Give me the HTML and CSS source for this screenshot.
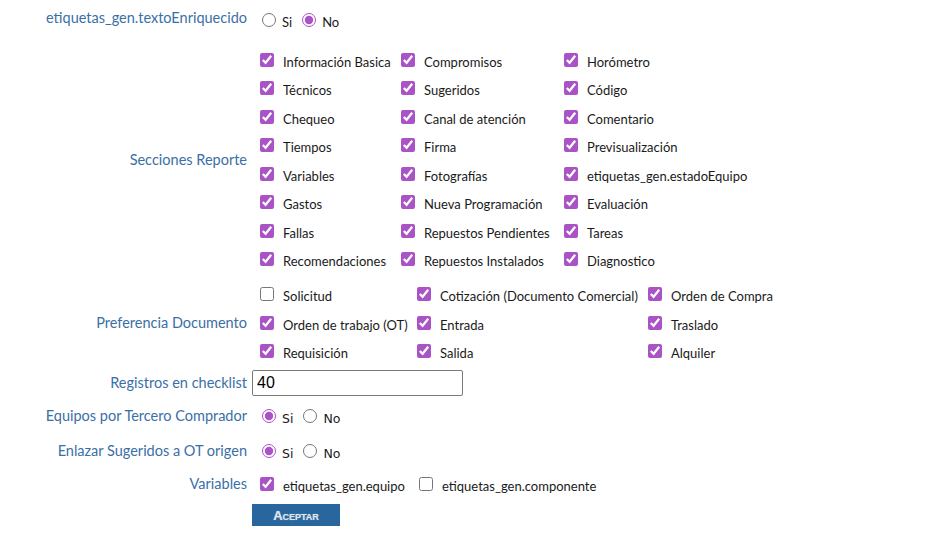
FILE: index.html
```html
<!DOCTYPE html>
<html lang="es">
<head>
<meta charset="utf-8">
<title>Configuración</title>
<link rel="stylesheet" href="styles.css">
</head>
<body>
<form class="form">
  <div class="row r-rich">
    <div class="lbl">etiquetas_gen.textoEnriquecido</div>
    <div class="radios">
      <label class="radio"><input type="radio" name="rich"><span>Si</span></label>
      <label class="radio"><input type="radio" name="rich" checked><span>No</span></label>
    </div>
  </div>

  <div class="row r-rep">
    <div class="lbl lbl-up">Secciones Reporte</div>
    <div class="opts opts-rep">
      <label class="opt"><input type="checkbox" checked><span>Información Basica</span></label>
      <label class="opt"><input type="checkbox" checked><span>Compromisos</span></label>
      <label class="opt"><input type="checkbox" checked><span>Horómetro</span></label>
      <label class="opt"><input type="checkbox" checked><span>Técnicos</span></label>
      <label class="opt"><input type="checkbox" checked><span>Sugeridos</span></label>
      <label class="opt"><input type="checkbox" checked><span>Código</span></label>
      <label class="opt"><input type="checkbox" checked><span>Chequeo</span></label>
      <label class="opt"><input type="checkbox" checked><span>Canal de atención</span></label>
      <label class="opt"><input type="checkbox" checked><span>Comentario</span></label>
      <label class="opt"><input type="checkbox" checked><span>Tiempos</span></label>
      <label class="opt"><input type="checkbox" checked><span>Firma</span></label>
      <label class="opt"><input type="checkbox" checked><span>Previsualización</span></label>
      <label class="opt"><input type="checkbox" checked><span>Variables</span></label>
      <label class="opt"><input type="checkbox" checked><span>Fotografías</span></label>
      <label class="opt"><input type="checkbox" checked><span>etiquetas_gen.estadoEquipo</span></label>
      <label class="opt"><input type="checkbox" checked><span>Gastos</span></label>
      <label class="opt"><input type="checkbox" checked><span>Nueva Programación</span></label>
      <label class="opt"><input type="checkbox" checked><span>Evaluación</span></label>
      <label class="opt"><input type="checkbox" checked><span>Fallas</span></label>
      <label class="opt"><input type="checkbox" checked><span>Repuestos Pendientes</span></label>
      <label class="opt"><input type="checkbox" checked><span>Tareas</span></label>
      <label class="opt"><input type="checkbox" checked><span>Recomendaciones</span></label>
      <label class="opt"><input type="checkbox" checked><span>Repuestos Instalados</span></label>
      <label class="opt"><input type="checkbox" checked><span>Diagnostico</span></label>
    </div>
  </div>

  <div class="row r-doc">
    <div class="lbl lbl-up">Preferencia Documento</div>
    <div class="opts opts-doc">
      <label class="opt"><input type="checkbox"><span>Solicitud</span></label>
      <label class="opt"><input type="checkbox" checked><span>Cotización (Documento Comercial)</span></label>
      <label class="opt"><input type="checkbox" checked><span>Orden de Compra</span></label>
      <label class="opt"><input type="checkbox" checked><span>Orden de trabajo (OT)</span></label>
      <label class="opt"><input type="checkbox" checked><span>Entrada</span></label>
      <label class="opt"><input type="checkbox" checked><span>Traslado</span></label>
      <label class="opt"><input type="checkbox" checked><span>Requisición</span></label>
      <label class="opt"><input type="checkbox" checked><span>Salida</span></label>
      <label class="opt"><input type="checkbox" checked><span>Alquiler</span></label>
    </div>
  </div>

  <div class="row r-reg">
    <div class="lbl">Registros en checklist</div>
    <input class="txt" type="text" value="40">
  </div>

  <div class="row r-eq">
    <div class="lbl">Equipos por Tercero Comprador</div>
    <div class="radios radios-plain">
      <label class="radio"><input type="radio" name="eq" checked><span>Si</span></label>
      <label class="radio"><input type="radio" name="eq"><span>No</span></label>
    </div>
  </div>

  <div class="row r-enl">
    <div class="lbl">Enlazar Sugeridos a OT origen</div>
    <div class="radios radios-plain">
      <label class="radio"><input type="radio" name="enl" checked><span>Si</span></label>
      <label class="radio"><input type="radio" name="enl"><span>No</span></label>
    </div>
  </div>

  <div class="row r-var">
    <div class="lbl lbl-up">Variables</div>
    <div class="opts opts-var">
      <label class="opt"><input type="checkbox" checked><span>etiquetas_gen.equipo</span></label>
      <label class="opt"><input type="checkbox"><span>etiquetas_gen.componente</span></label>
    </div>
  </div>

  <div class="row r-btn">
    <div class="lbl"></div>
    <button class="btn" type="button">Aceptar</button>
  </div>
</form>
</body>
</html>
```

FILE: styles.css
```css
html, body {
  margin: 0;
  padding: 0;
  background: #ffffff;
}

body {
  padding: 8px;
  font-family: "Lato", "Liberation Sans", sans-serif;
  color: #1a1a1a;
}

.form {
  display: flex;
  flex-direction: column;
  margin: 0;
}

.row {
  display: flex;
  align-items: center;
}

.lbl {
  flex: none;
  box-sizing: border-box;
  width: 244px;
  padding-right: 5px;
  text-align: right;
  font-size: 14.5px;
  color: #3a6fa6;
  line-height: 18px;
}

.lbl-up {
  padding-bottom: 6px;
}

.r-rich { height: 24px; }
.r-rep { margin-top: 16.5px; }
.r-doc { margin-top: 6.5px; }
.r-reg { margin-top: 1.5px; }
.r-eq { margin-top: 8px; height: 24px; }
.r-enl { margin-top: 11px; height: 24px; }
.r-var { margin-top: 10px; }
.r-btn { margin-top: 2.5px; }

.r-rich .lbl { margin-top: -4px; }

.radios {
  display: flex;
  align-items: center;
  height: 24px;
}

.radio {
  display: flex;
  align-items: center;
  font-size: 13px;
}

.radio input {
  flex: none;
  width: 14px;
  height: 14px;
  margin: 0 6px 0 10px;
  accent-color: #a953c6;
}

.radio span {
  margin-top: 3px;
}

.radios-plain .radio span {
  font-family: "DejaVu Sans", sans-serif;
  font-size: 12.5px;
  margin-top: 4px;
}

.opts {
  display: grid;
  grid-auto-rows: 28.5px;
}

.opts-rep { grid-template-columns: 141px 163px auto; }
.opts-doc { grid-template-columns: 157px 231px auto; }
.opts-var { grid-template-columns: 159px auto; }

.opt {
  display: flex;
  align-items: flex-start;
  font-size: 13px;
  white-space: nowrap;
}

.opt input {
  flex: none;
  width: 14px;
  height: 14px;
  margin: 4px 0 0 8px;
  accent-color: #a953c6;
}

.opt span {
  margin: 5px 0 0 9px;
  line-height: 16px;
}

.txt {
  box-sizing: border-box;
  width: 211px;
  height: 26px;
  margin: 0;
  padding: 0 4px;
  border: 1px solid #7a7a7a;
  border-radius: 2px;
  font-family: "Liberation Sans", sans-serif;
  font-size: 16px;
  color: #000000;
}

.btn {
  width: 88px;
  height: 22px;
  margin: 0;
  padding: 0;
  border: none;
  background: #28669d;
  color: #dce5ee;
  font-family: "Liberation Sans", sans-serif;
  font-size: 13px;
  font-weight: bold;
  font-variant: small-caps;
  text-shadow: 0 0 1px rgba(255, 255, 255, 0.6);
}
```
